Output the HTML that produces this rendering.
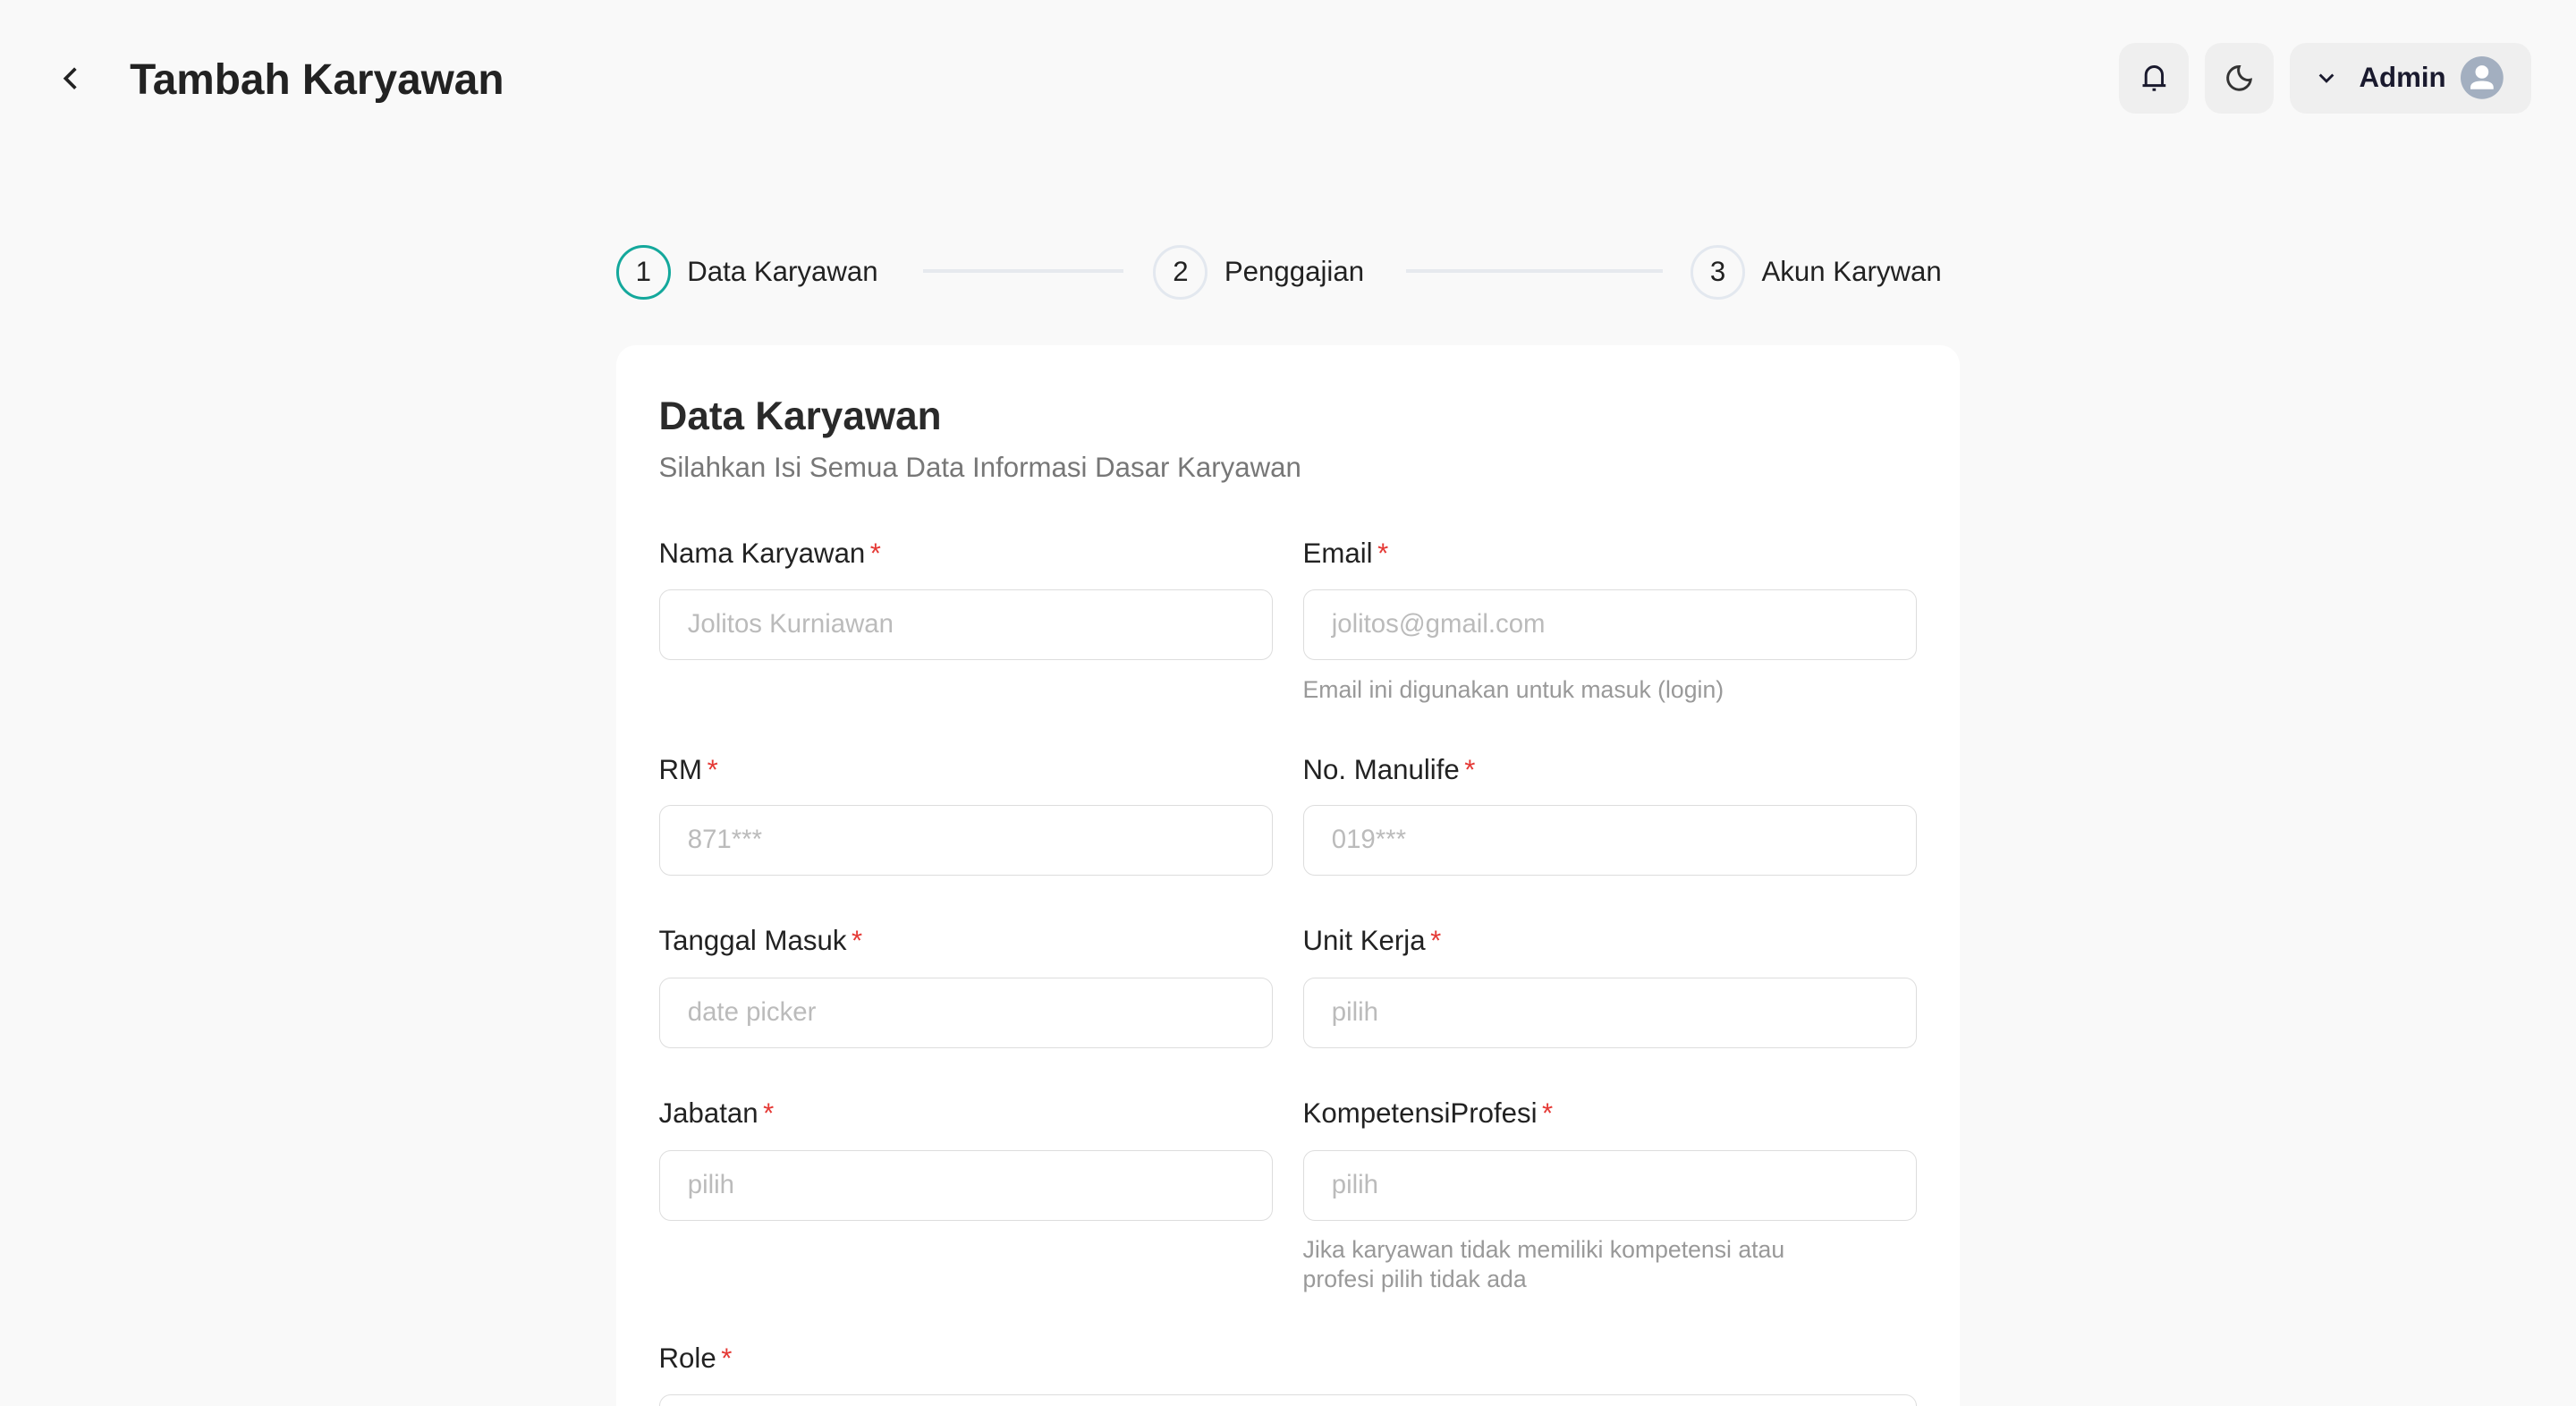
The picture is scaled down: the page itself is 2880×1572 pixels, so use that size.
<!DOCTYPE html>
<html><head><meta charset="utf-8"><style>
html,body{margin:0;padding:0;background:#f9f9f9;overflow:hidden}
body{width:2880px;height:1572px}
#z{zoom:1.83673;width:1568px;height:856px;position:relative;overflow:hidden;font-family:"Liberation Sans",sans-serif;color:#222}
.abs{position:absolute}
.btn{position:absolute;top:26px;height:43px;background:#efefef;border-radius:10px;display:flex;align-items:center;justify-content:center}
.step{position:absolute;top:149px;display:flex;align-items:center;font-size:17px;color:#222}
.circ{width:30px;height:30px;border:2px solid #e3e8ef;border-radius:50%;display:flex;align-items:center;justify-content:center;font-size:17px;margin-right:10px}
.line{position:absolute;top:164px;height:2px;background:#e6e9ee}
.card{position:absolute;left:375px;top:210px;width:818px;height:646px;background:#fff;border-radius:12px 12px 0 0}
.lbl{position:absolute;font-size:17px;color:#222}
.lbl b{color:#e53935;font-weight:normal;margin-left:3px}
.inp{position:absolute;width:374px;height:43px;border:1px solid #ddd;border-radius:7px;box-sizing:border-box;padding-left:17px;line-height:41px;font-size:16px;color:#bbb}
.hint{position:absolute;font-size:14.5px;color:#999;line-height:18px}
</style></head><body><div id="z">
<svg class="abs" style="left:36px;top:40px" width="14" height="16" viewBox="0 0 14 16"><path d="M10 2L4 8l6 6" fill="none" stroke="#222" stroke-width="2"/></svg>
<div class="abs" style="left:79px;top:34px;font-size:26px;font-weight:bold;color:#222">Tambah Karyawan</div>
<div class="btn" style="left:1290px;width:42px"><svg width="20" height="20" viewBox="0 0 20 20"><path d="M5 14V8a5 5 0 0 1 10 0v6M3 14.5h14M9 17h2" fill="none" stroke="#1a1a2e" stroke-width="1.6"/></svg></div>
<div class="btn" style="left:1342px;width:42px"><svg width="20" height="20" viewBox="0 0 20 20"><path d="M10 3a6 6 0 0 0 7 8 7 7 0 1 1-7-8z" fill="none" stroke="#333" stroke-width="1.6"/></svg></div>
<div class="btn" style="left:1394px;width:147px;justify-content:flex-start">
<svg style="margin-left:16px" width="12" height="10" viewBox="0 0 12 10"><path d="M2 3l4 4 4-4" fill="none" stroke="#1a1a2e" stroke-width="1.6"/></svg>
<span style="margin-left:14px;font-size:17px;font-weight:bold;color:#1a1a2e">Admin</span>
<svg style="margin-left:9px" width="26" height="26" viewBox="0 0 26 26"><circle cx="13" cy="13" r="13" fill="#a3afc0"/><circle cx="13" cy="9.5" r="4" fill="#fff"/><path d="M6 19c0-3 3-4 7-4s7 1 7 4v1H6z" fill="#fff"/></svg>
</div>
<div class="step" style="left:375px"><div class="circ" style="border-color:#14a89c">1</div>Data Karyawan</div>
<div class="line" style="left:562px;width:122px"></div>
<div class="step" style="left:702px"><div class="circ">2</div>Penggajian</div>
<div class="line" style="left:856px;width:156px"></div>
<div class="step" style="left:1029px"><div class="circ">3</div>Akun Karywan</div>
<div class="card"></div>
<div class="abs" style="left:401px;top:240px;font-size:24px;font-weight:bold;color:#2a2a2a">Data Karyawan</div>
<div class="abs" style="left:401px;top:275px;font-size:17px;color:#777">Silahkan Isi Semua Data Informasi Dasar Karyawan</div>
<div class="lbl" style="left:401px;top:327px">Nama Karyawan<b>*</b></div>
<div class="inp" style="left:401px;top:359px">Jolitos Kurniawan</div>
<div class="lbl" style="left:793px;top:327px">Email<b>*</b></div>
<div class="inp" style="left:793px;top:359px">jolitos@gmail.com</div>
<div class="hint" style="left:793px;top:411px">Email ini digunakan untuk masuk (login)</div>
<div class="lbl" style="left:401px;top:459px">RM<b>*</b></div>
<div class="inp" style="left:401px;top:490px">871***</div>
<div class="lbl" style="left:793px;top:459px">No. Manulife<b>*</b></div>
<div class="inp" style="left:793px;top:490px">019***</div>
<div class="lbl" style="left:401px;top:563px">Tanggal Masuk<b>*</b></div>
<div class="inp" style="left:401px;top:595px">date picker</div>
<div class="lbl" style="left:793px;top:563px">Unit Kerja<b>*</b></div>
<div class="inp" style="left:793px;top:595px">pilih</div>
<div class="lbl" style="left:401px;top:668px">Jabatan<b>*</b></div>
<div class="inp" style="left:401px;top:700px">pilih</div>
<div class="lbl" style="left:793px;top:668px">KompetensiProfesi<b>*</b></div>
<div class="inp" style="left:793px;top:700px">pilih</div>
<div class="hint" style="left:793px;top:752px;width:335px">Jika karyawan tidak memiliki kompetensi atau profesi pilih tidak ada</div>
<div class="lbl" style="left:401px;top:817px">Role<b>*</b></div>
<div class="inp" style="left:401px;top:849px;width:766px"></div>
</div></body></html>
